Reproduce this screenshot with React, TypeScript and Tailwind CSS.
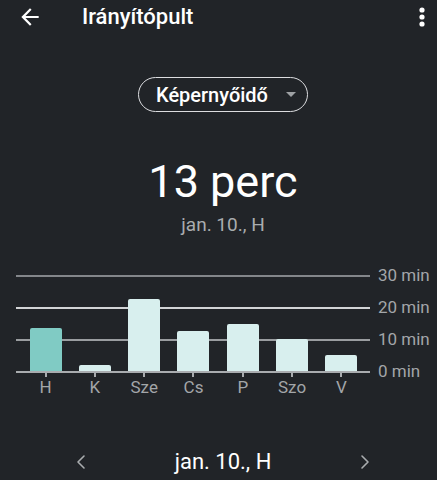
import { ReactNode } from 'react'

const days = [
  { label: 'H', h: 43, active: true },
  { label: 'K', h: 6 },
  { label: 'Sze', h: 72 },
  { label: 'Cs', h: 40 },
  { label: 'P', h: 47 },
  { label: 'Szo', h: 32 },
  { label: 'V', h: 16 },
]

const gridLines = [
  { label: '30 min', cls: 'top-0 bg-[#83868a]' },
  { label: '20 min', cls: 'top-[32px] bg-[#d2d4d6]' },
  { label: '10 min', cls: 'top-[64px] bg-[#9a9da0]' },
  { label: '0 min', cls: 'top-[96px] bg-[#a9acaf]' },
]

function Chevron({ dir }: { dir: 'left' | 'right' }) {
  return (
    <svg width="24" height="24" viewBox="0 0 24 24" fill="none">
      <path
        d={dir === 'left' ? 'M15 6l-6 6 6 6' : 'M9 6l6 6-6 6'}
        stroke="#a9acaf"
        strokeWidth="1.6"
        strokeLinecap="round"
        strokeLinejoin="round"
      />
    </svg>
  )
}

function IconButton({ children, className }: { children: ReactNode; className?: string }) {
  return <div className={`flex items-center justify-center ${className ?? ''}`}>{children}</div>
}

export default function App() {
  return (
    <div
      className="w-[437px] h-[480px] overflow-hidden bg-[#212428] text-white flex flex-col"
      style={{ fontFamily: 'Roboto, "Noto Sans", sans-serif' }}
    >
      {/* Toolbar */}
      <div className="h-[34px] flex items-center pl-[17px] pr-[11px]">
        <IconButton className="w-[26px] h-[26px]">
          <svg width="26" height="26" viewBox="0 0 24 24" fill="#ffffff">
            <path d="M20 11H7.83l5.59-5.59L12 4l-8 8 8 8 1.41-1.41L7.83 13H20v-2z" />
          </svg>
        </IconButton>
        <h1 className="ml-[39px] text-[22px] font-medium leading-none">Irányítópult</h1>
        <IconButton className="ml-auto w-[8px] h-[20px]">
          <svg width="8" height="20" viewBox="0 0 8 20" fill="#ffffff">
            <circle cx="4" cy="3" r="2.6" />
            <circle cx="4" cy="10" r="2.6" />
            <circle cx="4" cy="17" r="2.6" />
          </svg>
        </IconButton>
      </div>

      <div className="flex flex-col items-center pl-[9px]">
        {/* Metric picker */}
        <div className="mt-[43px] w-[170px] h-[35px] rounded-full border-[1.5px] border-[#dcdde0] flex items-center pl-[17px] pr-[11px]">
          <span className="text-[20px] font-medium leading-none">Képernyőidő</span>
          <svg className="ml-auto" width="10" height="5" viewBox="0 0 10 5" fill="#9ea1a4">
            <path d="M0 0h10L5 5z" />
          </svg>
        </div>

        {/* Total */}
        <div className="mt-[44px] text-[45px] leading-[52px] font-normal">13 perc</div>
        <div className="mt-[7px] text-[19px] leading-[20px] text-[#a9acaf]">jan. 10., H</div>
      </div>

      {/* Chart */}
      <div className="mt-[24px] flex">
        <div className="ml-[16px] w-[354px] pt-[16px]">
          <div className="relative h-[98px]">
            {gridLines.map((g) => (
              <div key={g.label} className={`absolute left-0 right-0 h-[2px] ${g.cls}`} />
            ))}
            <div className="relative h-[96px] grid grid-cols-7 pl-[5px] pr-[4px] items-end">
              {days.map((d) => (
                <div key={d.label} className="flex justify-center">
                  <div
                    className={`w-[32px] rounded-t-[2px] ${d.active ? 'bg-[#80cbc4]' : 'bg-[#d8efee]'}`}
                    style={{ height: d.h }}
                  />
                </div>
              ))}
            </div>
          </div>
          <div className="grid grid-cols-7 pl-[5px] pr-[4px]">
            {days.map((d) => (
              <div key={d.label} className="flex flex-col items-center">
                <div className="w-[2px] h-[4px] bg-[#a9acaf]" />
                <span className="text-[17px] leading-[20px] text-[#a3a6a9]">{d.label}</span>
              </div>
            ))}
          </div>
        </div>
        <div className="ml-[8px] flex flex-col">
          {gridLines.map((g) => (
            <div key={g.label} className="h-[32px] leading-[32px] text-[17px] text-[#a3a6a9] whitespace-nowrap">
              {g.label}
            </div>
          ))}
        </div>
      </div>

      {/* Day navigation */}
      <div className="mt-[53px] flex items-center pl-[69px] pr-[60px]">
        <Chevron dir="left" />
        <div className="flex-1 text-center text-[22px] leading-[24px]">jan. 10., H</div>
        <Chevron dir="right" />
      </div>
    </div>
  )
}
